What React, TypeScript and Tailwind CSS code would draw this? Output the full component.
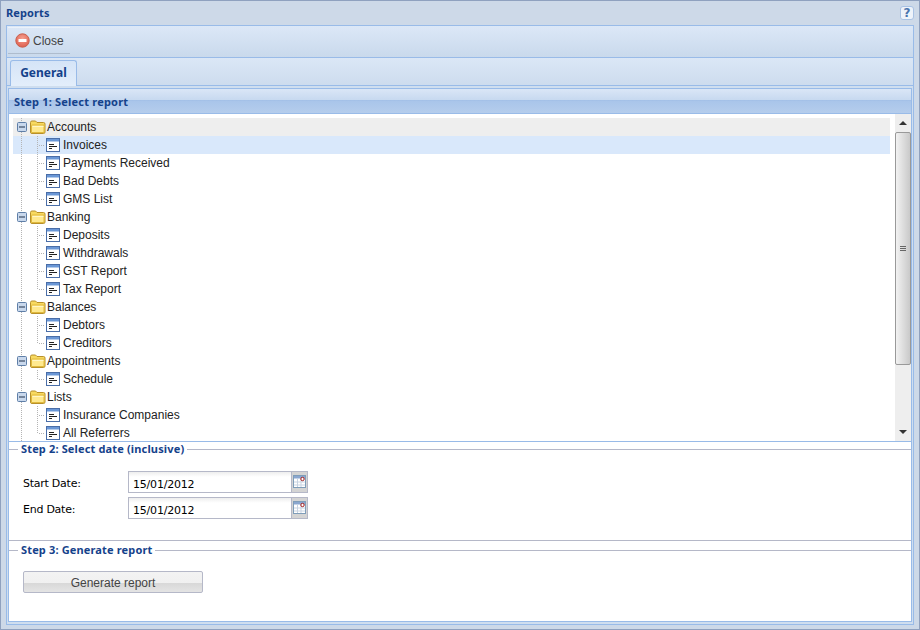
import React from "react";

const Dots = ({ child, last, open }: { child?: boolean; last?: boolean; open?: boolean }) => (
  <svg width="33" height="18" className="shrink-0" viewBox="0 0 33 18">
    <g fill="#b4b4b4">
      {Array.from({ length: 9 }).map((_, i) => (
        <rect key={i} x="8" y={i * 2} width="1" height="1" />
      ))}
      {child &&
        Array.from({ length: 9 }).map((_, i) =>
          last && i > 4 ? null : <rect key={"b" + i} x="24" y={i * 2} width="1" height="1" />
        )}
      {child && [26, 28, 30].map((x) => <rect key={x} x={x} y="9" width="1" height="1" />)}
    </g>
    {open && (
      <g>
        <rect x="4.500" y="4.500" width="9" height="9" rx="1" fill="#c9d8ec" stroke="#5f7fa8" />
        <rect x="6" y="8.500" width="6" height="1" fill="#20304a" />
      </g>
    )}
  </svg>
);

const Folder = () => (
  <svg width="16" height="14" viewBox="0 0 16 14" className="shrink-0">
    <path d="M0.500 12V2.500Q0.500 1 2 1H5.500L7 2.500H13.500Q15 2.500 15 4V12Q15 13.500 13.500 13.500H2Q0.500 13.500 0.500 12Z" fill="#f7d960" stroke="#b8902a" />
    <path d="M1.500 12.500V5.500Q1.500 5 2 5H14V12.500Z" fill="#ffe98f" stroke="#e0b93c" />
    <path d="M2.500 6.500H13.500" stroke="#fff6c8" />
  </svg>
);

const ReportIcon = () => (
  <svg width="14" height="14" viewBox="0 0 14 14" className="shrink-0">
    <rect x="0.500" y="0.500" width="13" height="13" fill="#fff" stroke="#4a6ea8" />
    <rect x="1" y="1" width="12" height="2.500" fill="#6a97d6" />
    <path d="M3 6.500H8M3 8.500H11M3 10.500H6" stroke="#222" />
  </svg>
);

const CalIcon = () => (
  <svg width="13" height="13" viewBox="0 0 13 13">
    <rect x="0.500" y="0.500" width="12" height="12" fill="#fff" stroke="#7f9db9" />
    <rect x="1" y="1" width="11" height="2.500" fill="#8aa6cf" />
    <path d="M4.500 4V12M8 4V12M1 7H12M1 10H12" stroke="#c8d3e2" />
    <circle cx="9.500" cy="4" r="1.700" fill="#fff" stroke="#a01818" />
  </svg>
);

const groups: [string, string[]][] = [
  ["Accounts", ["Invoices", "Payments Received", "Bad Debts", "GMS List"]],
  ["Banking", ["Deposits", "Withdrawals", "GST Report", "Tax Report"]],
  ["Balances", ["Debtors", "Creditors"]],
  ["Appointments", ["Schedule"]],
  ["Lists", ["Insurance Companies", "All Referrers"]],
];

const Legend = ({ text }: { text: string }) => (
  <div className="flex items-center h-[14px]">
    <div className="w-[9px] h-px bg-[#b5b8c8]" />
    <span className="px-[3px] text-[#15428b] font-bold text-[11px] leading-[14px] tracking-[0.15px] font-['Noto_Sans',sans-serif]">{text}</span>
    <div className="flex-1 h-px bg-[#b5b8c8]" />
  </div>
);

const DateRow = ({ label }: { label: string }) => (
  <div className="flex items-center h-[22px] mb-[4px]">
    <span className="w-[105px] pt-[5px] text-[11px] text-black font-['DejaVu_Sans',sans-serif] tracking-[-0.25px]">{label}</span>
    <div className="flex h-[22px] w-[180px] border border-[#b5b8c8] bg-gradient-to-b from-[#eeeeee] to-white to-[25%]">
      <span className="flex-1 pl-[4px] leading-[26px] text-[11px] text-black font-['DejaVu_Sans',sans-serif] tracking-[-0.2px]">15/01/2012</span>
      <div className="w-[17px] -my-px -mr-px border border-[#b5b8c8] bg-[#d4d4d4] flex items-start justify-center pt-[3px]">
        <CalIcon />
      </div>
    </div>
  </div>
);

export default function App() {
  return (
    <div className="w-[920px] h-[630px] bg-[#cdd9e8] border border-[#8fa1bf] flex flex-col overflow-hidden font-['Liberation_Sans',sans-serif]">
      <div className="h-[24px] flex items-center justify-between pl-[5px] pr-[5px] shrink-0">
        <span className="text-[#15428b] font-bold text-[11px] tracking-[0.1px] font-['Noto_Sans',sans-serif]">Reports</span>
        <div className="w-[14px] h-[14px] rounded-[3px] bg-[#eef3fa] border border-[#a9c2e4] flex items-center justify-center text-[#4a74ad] font-bold text-[12px] leading-none font-['DejaVu_Sans',sans-serif]">?</div>
      </div>
      <div className="mx-[5px] flex-1 min-h-0 flex flex-col border border-[#99bbe8] mb-[4px] bg-[#cfdeef]">
        <div className="h-[32px] shrink-0 border-b border-[#99bbe8] bg-gradient-to-b from-[#dce8f7] to-[#c9d9ec] pl-[1px] pt-[1px]">
          <div className="w-[62px] h-[27px] border-t border-b border-t-[#eaf1fa] border-b-[#aebccd] flex items-center pl-[7px]">
            <svg width="15" height="15" viewBox="0 0 15 15">
              <defs>
                <radialGradient id="cl" cx="50%" cy="35%" r="70%">
                  <stop offset="0" stopColor="#f6a090" />
                  <stop offset="1" stopColor="#dc5a4a" />
                </radialGradient>
              </defs>
              <circle cx="7.500" cy="7.500" r="6.700" fill="url(#cl)" stroke="#c8604e" />
              <rect x="3.500" y="6" width="8" height="3" fill="#fff" />
            </svg>
            <span className="ml-[3px] text-[12px] text-[#444]">Close</span>
          </div>
        </div>
        <div className="h-[28px] shrink-0 border-b border-[#99bbe8] bg-gradient-to-b from-[#dbe7f6] to-[#cddcee] pl-[3px] pt-[2px] flex">
          <div className="w-[67px] h-[26px] border border-b-0 border-[#99bbe8] rounded-t-[3px] bg-gradient-to-b from-[#d5e4f7] to-[#e3eefb] text-center text-[#15428b] font-bold text-[12px] leading-[23px] font-['Noto_Sans',sans-serif]">General</div>
        </div>
        <div className="flex-1 min-h-0 mx-px mt-[2px] mb-[2px] flex flex-col border-x border-[#99bbe8]">
          <div className="h-[26px] shrink-0 border-y border-[#99bbe8] flex items-center pt-[2px] pl-[5px] text-[#15428b] font-bold text-[11px] tracking-[0.2px] font-['Noto_Sans',sans-serif] bg-[linear-gradient(#dae6f6_0,#c7d9f0_46%,#9fbde6_46%,#a9c5ea_50%,#b5cdec_100%)]">
            Step 1: Select report
          </div>
          <div className="h-[328px] shrink-0 flex bg-white border-b border-[#99bbe8] overflow-hidden">
            <div className="w-[886px] pl-[4px] pt-[4px] h-full overflow-hidden text-[12px] text-[#222]">
              {groups.map(([g, items]) => (
                <div key={g}>
                  <div className={`h-[18px] flex items-center w-[877px] ${g === "Accounts" ? "bg-[#eeeeee]" : ""}`}>
                    <Dots open />
                    <div className="-ml-[16px] flex items-center">
                      <Folder />
                      <span className="ml-[1px] leading-[18px]">{g}</span>
                    </div>
                  </div>
                  {items.map((it, idx) => (
                    <div key={it} className={`h-[18px] flex items-center w-[877px] ${it === "Invoices" ? "bg-[#d9e8fb]" : ""}`}>
                      <Dots child last={idx === items.length - 1} />
                      <ReportIcon />
                      <span className="ml-[3px] leading-[18px]">{it}</span>
                    </div>
                  ))}
                </div>
              ))}
            </div>
            <div className="w-[16px] shrink-0 bg-[#eeeeee] flex flex-col items-center">
              <div className="h-[18px] shrink-0 flex items-center justify-center">
                <svg width="8" height="4" viewBox="0 0 8 4"><path d="M0 4L4 0L8 4Z" fill="#333" /></svg>
              </div>
              <div className="w-[16px] h-[233px] shrink-0 border border-[#999] rounded-[2px] bg-gradient-to-r from-[#f2f2f2] to-[#c9c9c9] flex flex-col items-center justify-center gap-px">
                <div className="w-[6px] h-px bg-[#666]" />
                <div className="w-[6px] h-px bg-[#666]" />
                <div className="w-[6px] h-px bg-[#666]" />
              </div>
              <div className="flex-1" />
              <div className="h-[18px] shrink-0 flex items-center justify-center">
                <svg width="8" height="4" viewBox="0 0 8 4"><path d="M0 0L4 4L8 0Z" fill="#333" /></svg>
              </div>
            </div>
          </div>
          <div className="flex-1 min-h-0 bg-white flex flex-col">
            <div className="h-[99px] shrink-0 border-b border-[#b5b8c8]">
              <Legend text="Step 2: Select date (inclusive)" />
              <div className="pl-[14px] pt-[15px]">
                <DateRow label="Start Date:" />
                <DateRow label="End Date:" />
              </div>
            </div>
            <div className="flex-1 min-h-0 pt-[2px] border-b border-[#99bbe8]">
              <Legend text="Step 3: Generate report" />
              <div className="pl-[14px] pt-[13px]">
                <button className="w-[180px] h-[22px] rounded-[2px] border border-[#b5b8c8] bg-[linear-gradient(#f3f3f3_0,#f0f0f0_55%,#d8d8d8_56%,#e4e4e4_100%)] text-[12px] text-[#444] font-['Liberation_Sans',sans-serif] leading-[22px]">Generate report</button>
              </div>
            </div>
          </div>
        </div>
      </div>
    </div>
  );
}
